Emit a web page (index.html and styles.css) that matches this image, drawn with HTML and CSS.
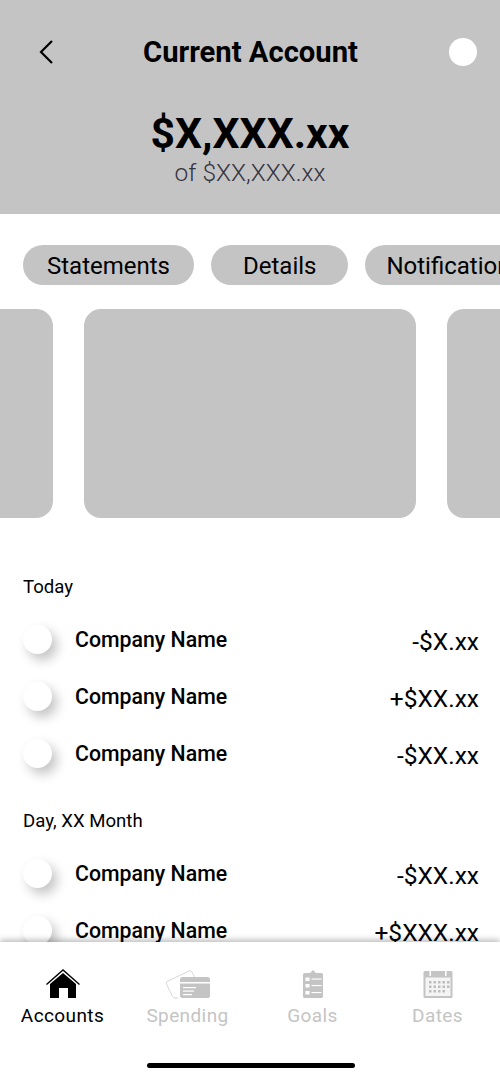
FILE: index.html
```html
<!DOCTYPE html>
<html lang="en">
<head>
<meta charset="utf-8">
<title>Current Account</title>
<link rel="stylesheet" href="styles.css">
</head>
<body>
<div class="page">
  <div class="content">
    <header class="header">
      <div class="topbar">
        <svg class="back" width="16" height="26" viewBox="0 0 16 26"><path d="M14 2 L3 13 L14 24" fill="none" stroke="#000" stroke-width="2.2"/></svg>
        <h1 class="title">Current Account</h1>
        <span class="avatar"></span>
      </div>
      <div class="balance">$X,XXX.xx</div>
      <div class="limit">of $XX,XXX.xx</div>
    </header>
    <nav class="pills">
      <span class="pill pill-statements">Statements</span>
      <span class="pill pill-details">Details</span>
      <span class="pill pill-notifications">Notifications</span>
    </nav>
    <section class="carousel">
      <div class="card"></div>
      <div class="card"></div>
      <div class="card"></div>
    </section>
    <section class="group">
      <h2 class="day">Today</h2>
      <div class="row"><span class="dot"></span><span class="name">Company Name</span><span class="amount">-$X.xx</span></div>
      <div class="row"><span class="dot"></span><span class="name">Company Name</span><span class="amount">+$XX.xx</span></div>
      <div class="row"><span class="dot"></span><span class="name">Company Name</span><span class="amount">-$XX.xx</span></div>
    </section>
    <section class="group group-second">
      <h2 class="day">Day, XX Month</h2>
      <div class="row"><span class="dot"></span><span class="name">Company Name</span><span class="amount">-$XX.xx</span></div>
      <div class="row"><span class="dot"></span><span class="name">Company Name</span><span class="amount">+$XXX.xx</span></div>
    </section>
  </div>
  <footer class="tabbar">
    <div class="tabs">
      <div class="tab tab-active">
        <svg class="tab-icon" width="36" height="32" viewBox="0 0 36 32">
          <path d="M1.5 16.500 L18 2 L34.500 16.500" fill="none" stroke="#000" stroke-width="1.400"/>
          <path fill-rule="evenodd" d="M5 16 L18 5 L31 16 V30 H23 V20 H14 V30 H5 Z" fill="#000"/>
        </svg>
        <span class="tab-label">Accounts</span>
      </div>
      <div class="tab">
        <svg class="tab-icon" width="46" height="32" viewBox="0 0 46 32">
          <path d="M2 13.500 L24 3 Q26 2 27 4 L30 10 M13 30 H10 Q8.500 30 7.500 28.500 L1.500 16 Q1 14.500 2 13.500" fill="none" stroke="#ccc" stroke-width="0.800"/>
          <rect x="15" y="9" width="30" height="21" rx="2.500" fill="#c4c4c4"/>
          <rect x="15" y="14" width="30" height="1.500" fill="#fff"/>
          <rect x="18" y="19" width="13" height="1.200" fill="#fff"/>
          <rect x="18" y="22.500" width="11" height="1.200" fill="#fff"/>
          <rect x="18" y="26" width="9" height="1.200" fill="#fff"/>
        </svg>
        <span class="tab-label">Spending</span>
      </div>
      <div class="tab">
        <svg class="tab-icon" width="22" height="32" viewBox="0 0 22 32">
          <path d="M2.500 5 H8 L11 2 L14 5 H19.500 Q21 5 21 6.500 V28.500 Q21 30 19.500 30 H2.500 Q1 30 1 28.500 V6.500 Q1 5 2.500 5 Z" fill="#c4c4c4"/>
          <rect x="3.500" y="9.500" width="4" height="3.500" fill="#fff"/>
          <rect x="3.500" y="16" width="4" height="3.500" fill="#fff"/>
          <rect x="3.500" y="23" width="4" height="3.500" fill="#fff"/>
          <rect x="9.500" y="10.500" width="10" height="1.100" fill="#fff"/>
          <rect x="9.500" y="17" width="10" height="1.100" fill="#fff"/>
          <rect x="9.500" y="24" width="10" height="1.100" fill="#fff"/>
        </svg>
        <span class="tab-label">Goals</span>
      </div>
      <div class="tab">
        <svg class="tab-icon" width="30" height="32" viewBox="0 0 30 32">
          <path d="M2 3 H28 Q29.500 3 29.500 4.500 V28.500 Q29.500 30 28 30 H2 Q0.500 30 0.500 28.500 V4.500 Q0.500 3 2 3 Z" fill="#c4c4c4"/>
          <rect x="2.500" y="9.500" width="25" height="18.500" fill="#f4f4f4"/>
          <rect x="6.500" y="1" width="1.500" height="7" fill="#fff"/>
          <rect x="22" y="1" width="1.500" height="7" fill="#fff"/>
          <g fill="#bdbdbd">
            <rect x="6" y="13" width="2.500" height="2.500"/><rect x="10.500" y="13" width="2.500" height="2.500"/><rect x="15" y="13" width="2.500" height="2.500"/><rect x="19.500" y="13" width="2.500" height="2.500"/><rect x="24" y="13" width="2.500" height="2.500"/>
            <rect x="6" y="17.500" width="2.500" height="2.500"/><rect x="10.500" y="17.500" width="2.500" height="2.500"/><rect x="15" y="17.500" width="2.500" height="2.500"/><rect x="19.500" y="17.500" width="2.500" height="2.500"/><rect x="24" y="17.500" width="2.500" height="2.500"/>
            <rect x="6" y="22" width="2.500" height="2.500"/><rect x="10.500" y="22" width="2.500" height="2.500"/><rect x="15" y="22" width="2.500" height="2.500"/><rect x="19.500" y="22" width="2.500" height="2.500"/>
          </g>
        </svg>
        <span class="tab-label">Dates</span>
      </div>
    </div>
    <div class="home-bar"></div>
  </footer>
</div>
</body>
</html>
```
FILE: styles.css
```css
* { box-sizing: border-box; margin: 0; padding: 0; }
html, body { width: 500px; height: 1082px; overflow: hidden; background: #fff; }
body { font-family: Roboto, "Liberation Sans", sans-serif; color: #000; }
.page { height: 1082px; display: flex; flex-direction: column; }
.content { flex: 1; min-height: 0; overflow: hidden; }

.header { height: 214px; background: #c4c4c4; padding-top: 34px; display: flex; flex-direction: column; align-items: center; }
.topbar { width: 100%; height: 36px; padding: 0 23px 0 38px; display: flex; align-items: center; justify-content: space-between; }
.back { display: block; }
.title { margin-right: 2px; font-size: 29.200px; font-weight: 700; line-height: 36px; }
.avatar { width: 28px; height: 28px; border-radius: 50%; background: #fff; }
.balance { margin-top: 39px; font-size: 42.600px; font-weight: 700; line-height: 48px; }
.limit { margin-top: 2px; font-size: 24.500px; line-height: 28px; font-weight: 300; color: #33333f; }

.pills { margin-top: 31px; padding-left: 23px; display: flex; gap: 17px; overflow: hidden; }
.pill { flex: none; height: 40px; padding: 0 24px; border-radius: 20px; background: #c4c4c4; font-size: 24px; line-height: 42px; }
.pill-details { padding: 0 32px; }
.pill-notifications { padding-left: 21px; }

.carousel { margin-top: 24px; display: flex; justify-content: center; gap: 31px; overflow: hidden; }
.card { flex: none; width: 332px; height: 209px; border-radius: 17px; background: #c4c4c4; }

.group { margin-top: 57px; padding: 0 21px 0 23px; }
.group-second { margin-top: 27px; }
.day { font-size: 18.600px; font-weight: 400; line-height: 24px; }
.row { height: 57px; display: flex; align-items: center; }
.group .day + .row { margin-top: 12px; }
.dot { flex: none; width: 29px; height: 29px; border-radius: 50%; background: #fff; box-shadow: 5px 6px 12px rgba(0, 0, 0, 0.24); }
.name { margin-left: 23px; font-size: 21.300px; font-weight: 500; }
.amount { margin-left: auto; padding-top: 3px; font-size: 24.500px; }

.tabbar { flex: none; position: relative; height: 140px; background: #fff; box-shadow: 0 -2px 6px rgba(0, 0, 0, 0.28); padding-top: 26px; }
.tabs { display: grid; grid-template-columns: 125px 125px 125px 125px; }
.tab { display: flex; flex-direction: column; align-items: center; color: #c4c4c4; }
.tab-active { color: #000; }
.tab-icon { display: block; height: 32px; }
.tab-label { margin-top: 4px; font-size: 19px; line-height: 24px; letter-spacing: 0.4px; }
.home-bar { width: 208px; height: 5px; border-radius: 3px; background: #000; margin: 35px 0 0 147px; }
```
